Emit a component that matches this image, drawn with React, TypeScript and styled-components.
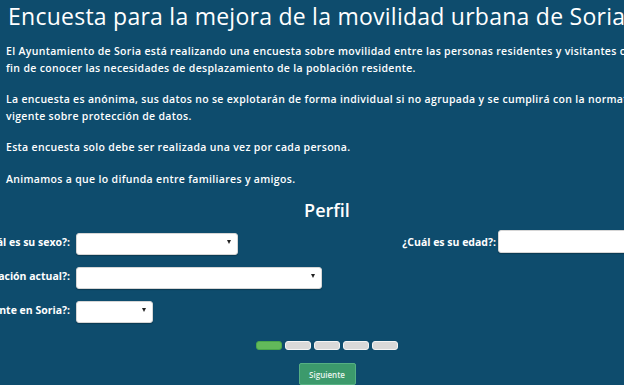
import React from "react";
import styled, { createGlobalStyle } from "styled-components";

const GlobalStyle = createGlobalStyle`
  html, body {
    margin: 0;
    padding: 0;
    background: #0e4c6d;
    overflow: hidden;
  }
  body {
    font-family: "Open Sans", "DejaVu Sans", sans-serif;
    color: #ffffff;
  }
`;

const Page = styled.div`
  width: 642px;
  padding: 1px 0 0 6px;
`;

const Title = styled.h1`
  margin: 0 0 0 2px;
  font-size: 23px;
  font-weight: 500;
  letter-spacing: 0.25px;
  line-height: 30px;
  white-space: nowrap;
`;

const Intro = styled.div`
  margin-top: 12px;
`;

const Para = styled.p`
  margin: 0 0 15px;
  font-size: 10.5px;
  font-weight: 600;
  line-height: 16.5px;
  white-space: nowrap;
  letter-spacing: 0.32px;
  &:last-child {
    margin-bottom: 11px;
  }
`;

const SectionTitle = styled.h2`
  margin: 0 0 8px;
  text-align: center;
  font-size: 18px;
  font-weight: 600;
  line-height: 24px;
`;

const Form = styled.div`
  margin-left: -100px;
  display: flex;
  flex-direction: column;
  gap: 12px;
`;

const Row = styled.div<{ $cols?: string }>`
  display: grid;
  grid-template-columns: ${(p) => p.$cols || "1fr"};
  align-items: center;
`;

const Field = styled.div`
  display: flex;
  align-items: center;
  gap: 6px;
`;

const Label = styled.label<{ $gap?: number }>`
  width: 164px;
  flex: none;
  text-align: right;
  font-size: 10.5px;
  font-weight: 700;
  white-space: nowrap;
  color: #ffffff;
  margin-right: ${(p) => (p.$gap ? p.$gap - 6 : 0)}px;
`;

const SelectWrap = styled.div<{ $w: number }>`
  position: relative;
  width: ${(p) => p.$w}px;
  height: 22px;
`;

const Select = styled.select`
  appearance: none;
  -webkit-appearance: none;
  width: 100%;
  height: 100%;
  border: 1px solid #d6d6d6;
  border-radius: 3px;
  background: #ffffff;
  box-shadow: 0 1px 1px rgba(0, 0, 0, 0.25);
  font-family: inherit;
  font-size: 10px;
  box-sizing: border-box;
`;

const Arrow = styled.span`
  position: absolute;
  right: 7px;
  top: 50%;
  transform: translateY(-50%);
  width: 0;
  height: 0;
  border-left: 2.5px solid transparent;
  border-right: 2.5px solid transparent;
  border-top: 4px solid #222;
  pointer-events: none;
`;

const TextInput = styled.input`
  width: 160px;
  height: 23px;
  box-sizing: border-box;
  border: 1px solid #d6d6d6;
  border-radius: 3px;
  background: #ffffff;
  box-shadow: 0 1px 1px rgba(0, 0, 0, 0.25);
`;

const Progress = styled.div`
  margin-top: 20px;
  display: flex;
  justify-content: center;
  gap: 3px;
`;

const Step = styled.div<{ $active?: boolean }>`
  width: 24px;
  height: 7px;
  border-radius: 3px;
  border: 1px solid ${(p) => (p.$active ? "#4aa64a" : "#f4f4f4")};
  background: ${(p) => (p.$active ? "#62b95a" : "#d9d9d9")};
`;

const Actions = styled.div`
  margin-top: 13px;
  display: flex;
  justify-content: center;
`;

const NextButton = styled.button`
  width: 57px;
  height: 22px;
  border: 1px solid #55b083;
  border-radius: 2px;
  background: #3c9a6c;
  color: #e8f4ee;
  font-family: inherit;
  font-size: 8px;
  font-weight: 600;
  padding: 0;
`;

export default function App() {
  return (
    <>
      <GlobalStyle />
      <Page>
        <Title>Encuesta para la mejora de la movilidad urbana de Soria</Title>
        <Intro>
          <Para>
            El Ayuntamiento de Soria está realizando una encuesta sobre movilidad entre las personas residentes y visitantes con el
            <br />
            fin de conocer las necesidades de desplazamiento de la población residente.
          </Para>
          <Para>
            La encuesta es anónima, sus datos no se explotarán de forma individual si no agrupada y se cumplirá con la normativa
            <br />
            vigente sobre protección de datos.
          </Para>
          <Para>Esta encuesta solo debe ser realizada una vez por cada persona.</Para>
          <Para>Animamos a que lo difunda entre familiares y amigos.</Para>
        </Intro>
        <SectionTitle>Perfil</SectionTitle>
        <Form>
          <Row $cols="426px 1fr">
            <Field>
              <Label>¿Cuál es su sexo?:</Label>
              <SelectWrap $w={162}>
                <Select />
                <Arrow />
              </SelectWrap>
            </Field>
            <Field>
              <Label $gap={2}>¿Cuál es su edad?:</Label>
              <TextInput />
            </Field>
          </Row>
          <Row>
            <Field>
              <Label>¿Cuál es su ocupación actual?:</Label>
              <SelectWrap $w={246}>
                <Select />
                <Arrow />
              </SelectWrap>
            </Field>
          </Row>
          <Row>
            <Field>
              <Label>¿Es residente en Soria?:</Label>
              <SelectWrap $w={77}>
                <Select />
                <Arrow />
              </SelectWrap>
            </Field>
          </Row>
        </Form>
        <Progress>
          <Step $active />
          <Step />
          <Step />
          <Step />
          <Step />
        </Progress>
        <Actions>
          <NextButton>Siguiente</NextButton>
        </Actions>
      </Page>
    </>
  );
}
